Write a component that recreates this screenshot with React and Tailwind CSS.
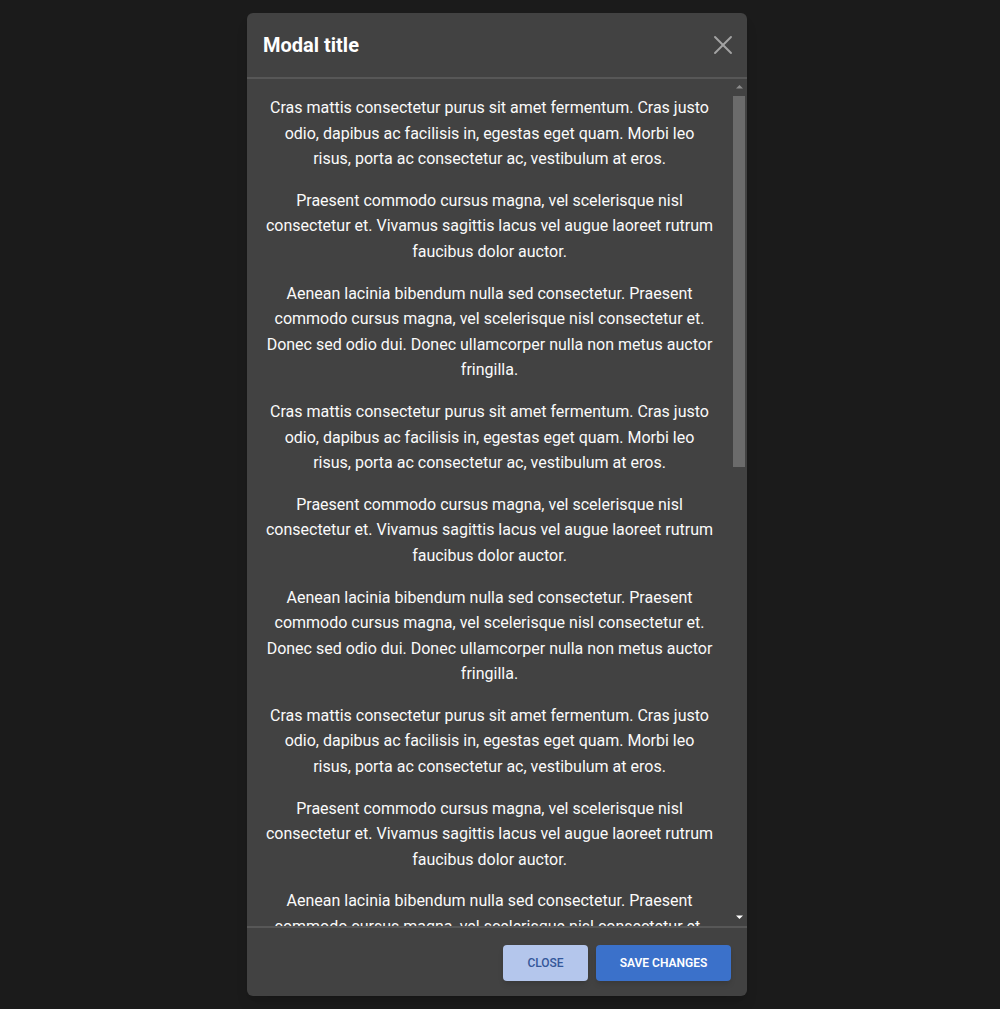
import { X } from "lucide-react";

const paragraphs = [
  "Cras mattis consectetur purus sit amet fermentum. Cras justo odio, dapibus ac facilisis in, egestas eget quam. Morbi leo risus, porta ac consectetur ac, vestibulum at eros.",
  "Praesent commodo cursus magna, vel scelerisque nisl consectetur et. Vivamus sagittis lacus vel augue laoreet rutrum faucibus dolor auctor.",
  "Aenean lacinia bibendum nulla sed consectetur. Praesent commodo cursus magna, vel scelerisque nisl consectetur et. Donec sed odio dui. Donec ullamcorper nulla non metus auctor fringilla.",
];

export default function App() {
  // same three paragraphs repeated, like the demo
  const body = Array.from({ length: 6 }).flatMap(() => paragraphs);

  return (
    <div
      className="min-h-[1009px] bg-[#1b1b1b] flex pl-[247px] py-[13px]"
      style={{ fontFamily: "Roboto, 'Liberation Sans', sans-serif" }}
    >
      <div className="w-[500px] h-[983px] bg-[#424242] rounded-md flex flex-col overflow-hidden shadow-lg">
        {/* Header */}
        <div className="h-[66px] shrink-0 flex items-center justify-between pl-4 pr-2 border-b-2 border-[#575757]">
          <h5 className="text-xl font-bold text-white">Modal title</h5>
          <button className="text-[#a3a3a3]">
            <X size={32} strokeWidth={1.4} />
          </button>
        </div>

        {/* Body + scrollbar */}
        <div className="flex-1 min-h-0 flex">
          <div className="flex-1 overflow-hidden px-[18px] py-4 text-center text-[#fafafa] text-base leading-[1.6]">
            {body.map((p, idx) => (
              <p key={idx} className="mb-4 last:mb-0">
                {p}
              </p>
            ))}
          </div>
          <div className="w-[15px] shrink-0 flex flex-col items-center">
            <svg width="15" height="17" viewBox="0 0 15 17">
              <path d="M4 9.5 L7.5 6 L11 9.5 Z" fill="#8c8c8c" />
            </svg>
            <div className="w-[12px] h-[371px] bg-[#6b6b6b] mr-[1px]" />
            <div className="flex-1" />
            <svg width="15" height="17" viewBox="0 0 15 17">
              <path d="M4 6.5 L11 6.5 L7.5 10 Z" fill="#ffffff" />
            </svg>
          </div>
        </div>

        {/* Footer */}
        <div className="h-[70px] shrink-0 flex items-center justify-end gap-2 px-4 pt-[1px] border-t-2 border-[#575757]">
          <button className="h-9 w-[85px] rounded bg-[#b4c6ec] text-[#34579a] text-xs font-medium uppercase shadow-md">
            Close
          </button>
          <button className="h-9 w-[135px] rounded bg-[#3b71ca] text-white text-xs font-semibold uppercase shadow-md">
            Save changes
          </button>
        </div>
      </div>
    </div>
  );
}
